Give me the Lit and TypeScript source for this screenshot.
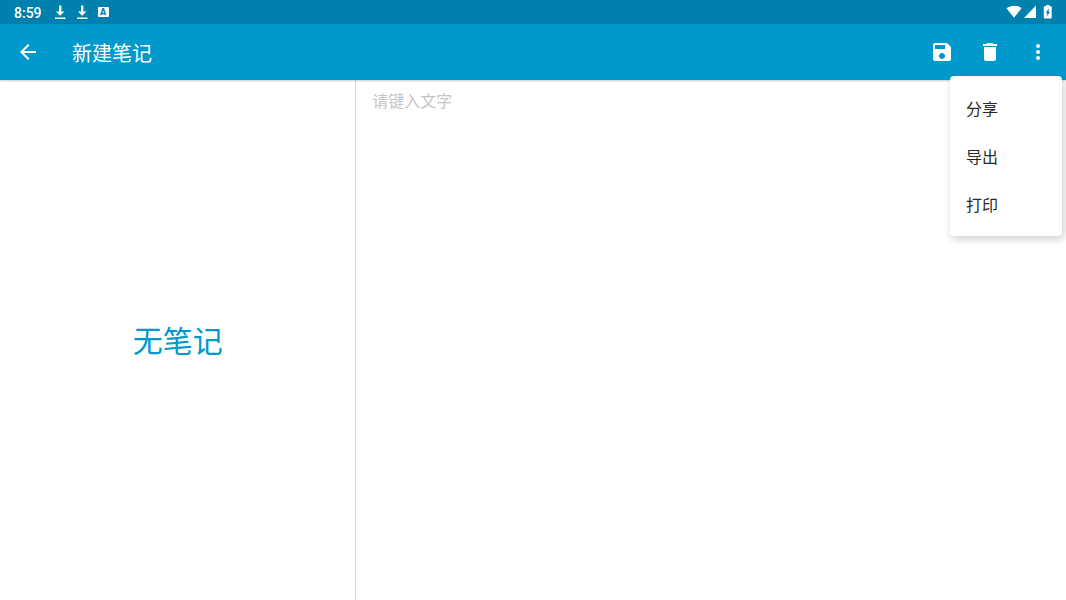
import { LitElement, html, css, svg } from "lit";
import { customElement, state } from "lit/decorators.js";

const download = svg`<path d="M5 .5h2.400v6h3L6.200 10.700 2 6.500h3zM1 12.500h10.500V14H1z" fill="currentColor"/>`;

@customElement("app-root")
export class AppRoot extends LitElement {
  @state() private menuOpen = true;
  @state() private note = "";

  static styles = css`
    :host {
      display: flex;
      flex-direction: column;
      min-height: 100vh;
      background: #fff;
      color: #2b2b2b;
      font-family: Roboto, "Noto Sans CJK SC", sans-serif;
    }
    * {
      box-sizing: border-box;
    }
    svg {
      display: block;
    }
    .status {
      display: flex;
      align-items: center;
      justify-content: space-between;
      height: 24px;
      padding: 0 14px;
      background: #0081ad;
      color: #fff;
    }
    .group {
      display: flex;
      align-items: center;
    }
    .clock {
      font-size: 14px;
      font-weight: 500;
      line-height: 24px;
      padding-top: 1px;
      margin-right: 12px;
    }
    .notices {
      gap: 10px;
    }
    .badge {
      width: 11px;
      height: 10px;
      border-radius: 1px;
      background: #fff;
      color: #0081ad;
      font-size: 9px;
      font-weight: 900;
      line-height: 10px;
      text-align: center;
    }
    .bar {
      position: relative;
      z-index: 1;
      display: flex;
      align-items: center;
      height: 56px;
      padding: 0 4px;
      background: #0099cd;
      color: #fff;
      box-shadow: 0 1px 2px rgba(0, 0, 0, 0.2);
    }
    .icon {
      display: flex;
      align-items: center;
      justify-content: center;
      width: 48px;
      height: 48px;
      padding: 0;
      border: 0;
      background: none;
      color: inherit;
      cursor: pointer;
    }
    .title {
      flex: 1;
      margin: 0;
      padding: 4px 0 0 20px;
      font-size: 20px;
      font-weight: 400;
      line-height: 28px;
    }
    .menu {
      position: absolute;
      top: 52px;
      right: 4px;
      width: 112px;
      padding: 8px 0;
      border-radius: 4px;
      background: #fff;
      color: #2b2b2b;
      box-shadow: 2px 3px 8px rgba(0, 0, 0, 0.2);
    }
    .item {
      display: block;
      width: 100%;
      height: 48px;
      padding: 4px 16px 0;
      border: 0;
      background: none;
      color: inherit;
      font: inherit;
      font-size: 16px;
      line-height: 24px;
      text-align: left;
      cursor: pointer;
    }
    .body {
      display: grid;
      grid-template-columns: 1fr 2fr;
      flex: 1;
    }
    .list {
      display: flex;
      align-items: center;
      justify-content: center;
      padding-top: 4px;
    }
    .empty {
      margin: 0;
      color: #0099cd;
      font-size: 30px;
      line-height: 40px;
    }
    .editor {
      display: block;
      width: 100%;
      height: 100%;
      padding: 8px 16px;
      border: 0;
      border-left: 1px solid #d4d4d4;
      border-radius: 0;
      outline: 0;
      resize: none;
      background: none;
      color: inherit;
      font: inherit;
      font-size: 16px;
      line-height: 28px;
    }
    .editor::placeholder {
      color: #c6c6c6;
      opacity: 1;
    }
  `;

  private icon(path: string) {
    return html`<svg width="24" height="24" viewBox="0 0 24 24" fill="currentColor" aria-hidden="true"><path d=${path} /></svg>`;
  }

  render() {
    return html`
      <div class="status">
        <div class="group">
          <span class="clock">8:59</span>
          <div class="group notices">
            <svg width="12" height="14" viewBox="0 0 12 14">${download}</svg>
            <svg width="12" height="14" viewBox="0 0 12 14">${download}</svg>
            <span class="badge">A</span>
          </div>
        </div>
        <svg width="46" height="14" viewBox="0 0 46 14" fill="#fff" aria-hidden="true">
          <path d="M.5 3.200C4.700-.2 11.300-.2 15.500 3.200L8 12.800z" />
          <path d="M30 .6V13H18z" />
          <path fill-rule="evenodd" d="M40 0h3.500v1.200h1.300q.9 0 .9.900v10.400q0 .9-.9.900h-6.100q-.9 0-.9-.9V2.100q0-.9.900-.9H40zM43.200 3.300L39.600 7.700h1.700L40.600 11.500l3.500-4.700h-1.700z" />
        </svg>
      </div>
      <header class="bar">
        <button class="icon" aria-label="返回">
          ${this.icon("M20 11H7.830l5.590-5.590L12 4l-8 8 8 8 1.410-1.410L7.830 13H20v-2z")}
        </button>
        <h1 class="title">新建笔记</h1>
        <button class="icon" aria-label="保存">
          ${this.icon("M17 3H5c-1.110 0-2 .9-2 2v14c0 1.100.890 2 2 2h14c1.100 0 2-.9 2-2V7l-4-4zm-5 16c-1.660 0-3-1.340-3-3s1.340-3 3-3 3 1.340 3 3-1.340 3-3 3zm3-10H5V5h10v4z")}
        </button>
        <button class="icon" aria-label="删除" @click=${() => (this.note = "")}>
          ${this.icon("M6 19c0 1.100.9 2 2 2h8c1.100 0 2-.9 2-2V7H6v12zM19 4h-3.500l-1-1h-5l-1 1H5v2h14V4z")}
        </button>
        <button class="icon" aria-label="更多选项" aria-expanded=${this.menuOpen} @click=${() => (this.menuOpen = !this.menuOpen)}>
          ${this.icon("M12 8c1.100 0 2-.9 2-2s-.9-2-2-2-2 .9-2 2 .9 2 2 2zm0 2c-1.100 0-2 .9-2 2s.9 2 2 2 2-.9 2-2-.9-2-2-2zm0 6c-1.100 0-2 .9-2 2s.9 2 2 2 2-.9 2-2-.9-2-2-2z")}
        </button>
        ${this.menuOpen
          ? html`<div class="menu" role="menu">
              ${["分享", "导出", "打印"].map((t) => html`<button class="item" role="menuitem">${t}</button>`)}
            </div>`
          : null}
      </header>
      <main class="body">
        <section class="list"><p class="empty">无笔记</p></section>
        <textarea
          class="editor"
          aria-label="笔记内容"
          placeholder="请键入文字"
          .value=${this.note}
          @input=${(e: Event) => (this.note = (e.target as HTMLTextAreaElement).value)}
        ></textarea>
      </main>
    `;
  }
}
